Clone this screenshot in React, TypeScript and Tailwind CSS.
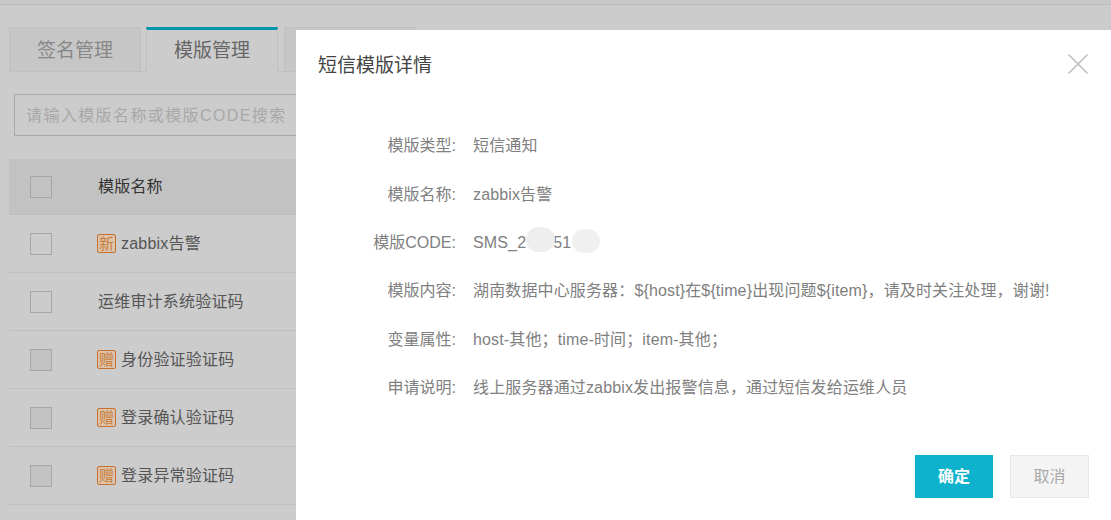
const FONT = "font-['Liberation_Sans','Noto_Sans_CJK_SC',sans-serif]";
const FW_COLON = "\uFF1A";
const FW_COMMA = "\uFF0C";
const FW_SEMI = "\uFF1B";

function Badge({ text }: { text: string }) {
  return (
    <span className="-ml-px mr-[5px] flex h-[19px] w-[19px] shrink-0 items-center justify-center rounded-[2px] border border-[#c9702c] bg-[#dcc3ac] text-[15px] leading-none text-[#c9803f]">
      {text}
    </span>
  );
}

function Row({ name, badge, dim, head }: { name: string; badge?: string; dim?: boolean; head?: boolean }) {
  return (
    <div className={`flex items-center border-b border-[#bfbfbf] pl-[21px] ${head ? "h-[56px] bg-[#c2c2c2]" : "h-[58px]"}`}>
      <span className={`h-[22px] w-[22px] shrink-0 border border-[#a6a6a6] ${dim ? "bg-[#c3c3c3]" : ""}`} />
      <div className={`ml-[46px] flex items-center text-[16px] tracking-[0.2px] ${head ? "text-[#333]" : "text-[#555]"}`}>
        {badge && <Badge text={badge} />}
        <span>{name}</span>
      </div>
    </div>
  );
}

function Detail({ label, children }: { label: string; children: React.ReactNode }) {
  return (
    <div className="flex h-[48.4px] items-center text-[16px] text-[#808080]">
      <div className="w-[160px] shrink-0 text-right">{label}:</div>
      <div className="ml-[17px] whitespace-nowrap tracking-[0.14px]">{children}</div>
    </div>
  );
}

export default function App() {
  return (
    <div className={`relative h-[520px] w-[1111px] overflow-hidden bg-[#cccccc] ${FONT}`}>
      <div className="h-[5px] border-b border-[#bdbdbd] bg-[#c8c8c8]" />
      <div className="pl-[9px] pt-[22px]">
        <div className="flex h-[45px] items-stretch border-b border-[#c0c0c0]">
          <div className="-mb-px flex w-[132px] items-center justify-center border border-[#c0c0c0] bg-[#c6c6c6] pt-[3px] text-[19px] text-[#888]">签名管理</div>
          <div className="-mb-px ml-[5px] flex w-[132px] items-center justify-center border-x border-t-[3px] border-x-[#c0c0c0] border-t-[#0096a8] bg-[#cccccc] text-[19px] text-[#666]">模版管理</div>
          <div className="-mb-px ml-[6px] w-[132px] border border-[#c0c0c0] bg-[#c6c6c6]" />
        </div>
        <div className="ml-[5px] mt-[22px] flex h-[42px] w-[300px] items-center border border-[#a8a8a8] pl-[11px] pt-[1px] text-[16px] tracking-[1.4px] text-[#a8a8a8]">
          请输入模版名称或模版CODE搜索
        </div>
        <div className="mt-[23px] w-[300px]">
          <Row head name="模版名称" />
          <Row name="zabbix告警" badge="新" />
          <Row name="运维审计系统验证码" />
          <Row dim name="身份验证验证码" badge="赠" />
          <Row dim name="登录确认验证码" badge="赠" />
          <Row dim name="登录异常验证码" badge="赠" />
        </div>
      </div>

      <div className="absolute bottom-0 left-[296px] top-[30px] w-[815px] bg-white">
        <div className="flex h-[69px] items-center justify-between pl-[22px] pr-[23px] pt-[3px]">
          <div className="text-[19px] text-[#444]">短信模版详情</div>
          <svg width="20" height="20" viewBox="0 0 20 20" className="mb-[5px]" fill="none" stroke="#c4c4c4" strokeWidth="1.6">
            <path d="M0.5 0.5 L19.5 19.5 M19.5 0.5 L0.5 19.5" />
          </svg>
        </div>
        <div className="pt-[23px]">
          <Detail label="模版类型">短信通知</Detail>
          <Detail label="模版名称">zabbix告警</Detail>
          <Detail label="模版CODE">
            <span className="relative flex items-center">
              SMS_2
              <span className="inline-block w-[27px]" />
              51
              <span className="absolute left-[53px] top-[-4px] h-[25px] w-[29px] rounded-full bg-[#eeeeee]" />
              <span className="absolute left-[99px] top-[-2px] h-[24px] w-[28px] rounded-full bg-[#f0f0f0]" />
            </span>
          </Detail>
          <Detail label="模版内容">{`湖南数据中心服务器${FW_COLON}\${host}在\${time}出现问题\${item}${FW_COMMA}请及时关注处理${FW_COMMA}谢谢!`}</Detail>
          <Detail label="变量属性">{`host-其他${FW_SEMI}time-时间${FW_SEMI}item-其他${FW_SEMI}`}</Detail>
          <Detail label="申请说明">{`线上服务器通过zabbix发出报警信息${FW_COMMA}通过短信发给运维人员`}</Detail>
        </div>
        <div className="absolute bottom-[22px] right-[22px] flex gap-[17px]">
          <div className="flex h-[43px] w-[78px] items-center justify-center bg-[#0fb2cc] text-[16px] font-bold text-white">确定</div>
          <div className="flex h-[43px] w-[79px] items-center justify-center border border-[#e8e8e8] bg-[#f4f4f4] text-[16px] text-[#a9a9a9]">取消</div>
        </div>
      </div>
    </div>
  );
}
